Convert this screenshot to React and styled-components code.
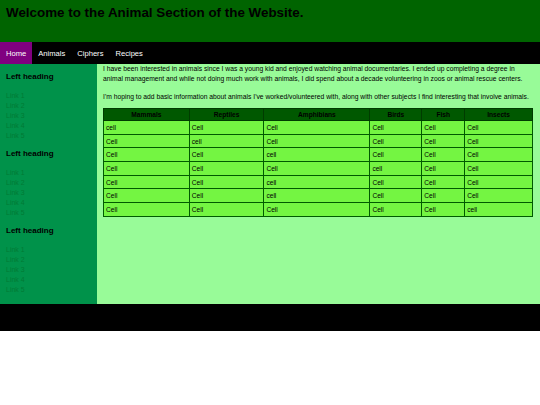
import React from 'react'
import styled, { createGlobalStyle } from 'styled-components'

const GlobalStyle = createGlobalStyle`
  html, body {
    margin: 0;
    padding: 0;
    background: #fff;
    font-family: "Liberation Sans", Arial, sans-serif;
  }
`

const Header = styled.header`
  background-color: #006400;
  height: 42px;
  padding: 5px 6px 0;
  box-sizing: border-box;
`

const Title = styled.h1`
  margin: 0;
  font-size: 13.4px;
  line-height: 15px;
  font-weight: bold;
  color: #000;
`

const Nav = styled.nav`
  display: flex;
  background-color: #000;
  height: 22px;
`

const NavItem = styled.span`
  display: flex;
  align-items: center;
  padding: 0 6px;
  font-size: 7.6px;
  color: #fff;
  cursor: pointer;
  background-color: ${p => (p.$active ? '#800080' : 'transparent')};
`

const Body = styled.div`
  display: flex;
  height: 240px;
`

const Sidebar = styled.aside`
  width: 97px;
  flex-shrink: 0;
  background-color: #00924a;
  padding: 8px 6px 0;
  box-sizing: border-box;
`

const SideHeading = styled.h3`
  margin: 0 0 9px;
  font-size: 8px;
  line-height: 10px;
  font-weight: bold;
  color: #000;
`

const LinkList = styled.ul`
  list-style: none;
  margin: 0 0 8px;
  padding: 0;
`

const SideLink = styled.li`
  font-size: 7px;
  line-height: 10px;
  color: #007a35;
`

const Main = styled.main`
  flex: 1;
  background-color: #98fb98;
  padding: 0 7px 0 6px;
`

const Para = styled.p`
  margin: 0 0 8px;
  font-size: 6.75px;
  line-height: 10px;
  color: #000;
  &:last-of-type {
    margin-bottom: 6px;
  }
`

const Table = styled.table`
  width: 100%;
  border-collapse: collapse;
  border: 1px solid #004a00;
  font-size: 6.6px;
`

const Th = styled.th`
  background-color: #005800;
  border: 1px solid #003c00;
  height: 11px;
  padding: 0 2px;
  font-weight: bold;
  color: #000;
  text-align: center;
  width: ${p => p.$w};
`

const Td = styled.td`
  background-color: #74f542;
  border: 1px solid #005a00;
  height: 12.7px;
  padding: 0 2px;
  color: #000;
`

const Footer = styled.footer`
  background-color: #000;
  height: 27px;
`

const columns = [
  ['Mammals', '20%'],
  ['Reptiles', '17.4%'],
  ['Amphibians', '24.7%'],
  ['Birds', '12.1%'],
  ['Fish', '10%'],
  ['Insects', '15.8%'],
]

const rows = [
  ['cell', 'Cell', 'Cell', 'Cell', 'Cell', 'Cell'],
  ['Cell', 'cell', 'Cell', 'Cell', 'Cell', 'Cell'],
  ['Cell', 'Cell', 'cell', 'Cell', 'Cell', 'Cell'],
  ['Cell', 'Cell', 'Cell', 'cell', 'Cell', 'Cell'],
  ['Cell', 'Cell', 'cell', 'Cell', 'Cell', 'Cell'],
  ['Cell', 'Cell', 'cell', 'Cell', 'Cell', 'Cell'],
  ['Cell', 'Cell', 'Cell', 'Cell', 'Cell', 'cell'],
]

const navItems = ['Home', 'Animals', 'Ciphers', 'Recipes']

const App = () => {
  return (
    <>
      <GlobalStyle />
      <Header>
        <Title>Welcome to the Animal Section of the Website.</Title>
      </Header>
      <Nav>
        {navItems.map((n, i) => (
          <NavItem key={n} $active={i === 0}>{n}</NavItem>
        ))}
      </Nav>
      <Body>
        <Sidebar>
          {[0, 1, 2].map(s => (
            <div key={s}>
              <SideHeading>Left heading</SideHeading>
              <LinkList>
                {[1, 2, 3, 4, 5].map(n => (
                  <SideLink key={n}>Link {n}</SideLink>
                ))}
              </LinkList>
            </div>
          ))}
        </Sidebar>
        <Main>
          <Para>
            I have been interested in animals since I was a young kid and enjoyed watching animal
            documentaries. I ended up completing a degree in animal management and while not doing
            much work with animals, I did spend about a decade volunteering in zoos or animal rescue
            centers.
          </Para>
          <Para>
            I'm hoping to add basic information about animals I've worked/volunteered with, along
            with other subjects I find interesting that involve animals.
          </Para>
          <Table>
            <thead>
              <tr>
                {columns.map(([c, w]) => (
                  <Th key={c} $w={w}>{c}</Th>
                ))}
              </tr>
            </thead>
            <tbody>
              {rows.map((r, i) => (
                <tr key={i}>
                  {r.map((c, j) => (
                    <Td key={j}>{c}</Td>
                  ))}
                </tr>
              ))}
            </tbody>
          </Table>
        </Main>
      </Body>
      <Footer />
    </>
  )
}

export default App
